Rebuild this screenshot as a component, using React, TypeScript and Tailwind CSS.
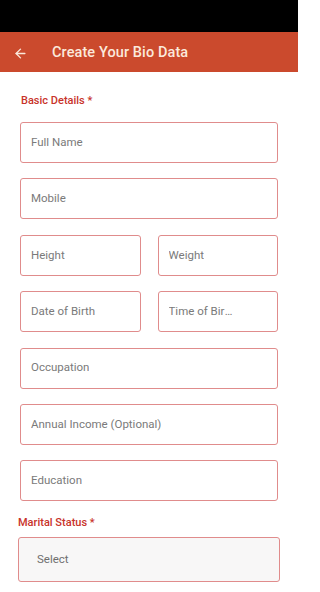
import { ArrowLeft } from "lucide-react";

function Field({ label, narrow }: { label: string; narrow?: boolean }) {
  return (
    <div className="h-[41px] rounded-[3px] border border-[#e08c8c] bg-white flex items-center px-[10px] min-w-0">
      <span className={`text-[11.5px] text-[#7a7a7a] truncate ${narrow ? "max-w-[66px]" : ""}`}>{label}</span>
    </div>
  );
}

export default function App() {
  return (
    <div
      className="w-[298px] h-[592px] bg-white overflow-hidden"
      style={{ fontFamily: "Roboto, 'Noto Sans', sans-serif" }}
    >
      <div className="h-[32px] bg-black" />
      <div className="h-[40px] bg-[#cb4a2d] flex items-center pl-[13px] pt-[2px]">
        <ArrowLeft className="w-[15px] h-[15px] text-[#fbe9dc]" strokeWidth={2.2} />
        <h1 className="ml-[24px] text-[14.5px] font-medium text-[#fbe9dc] tracking-[0.1px]">
          Create Your Bio Data
        </h1>
      </div>

      <div className="px-[20px] pt-[23px]">
        <p className="text-[11px] font-medium text-[#c8332a] leading-none pl-[1px]">Basic Details *</p>

        <div className="mt-[16px] flex flex-col gap-[15.4px]">
          <Field label="Full Name" />
          <Field label="Mobile" />
          <div className="grid grid-cols-2 gap-[17px]">
            <Field label="Height" />
            <Field label="Weight" />
          </div>
          <div className="grid grid-cols-2 gap-[17px]">
            <Field label="Date of Birth" />
            <Field label="Time of Birth" narrow />
          </div>
          <Field label="Occupation" />
          <Field label="Annual Income (Optional)" />
          <Field label="Education" />
        </div>
      </div>

      <div className="px-[18px] mt-[16px]">
        <p className="text-[11px] font-medium text-[#c8332a] leading-none">Marital Status *</p>
        <div className="mt-[9px] h-[45px] rounded-[3px] border border-[#e08c8c] bg-[#f8f7f7] flex items-center px-[18px]">
          <span className="text-[11.5px] text-[#6f6f6f]">Select</span>
        </div>
      </div>
    </div>
  );
}
